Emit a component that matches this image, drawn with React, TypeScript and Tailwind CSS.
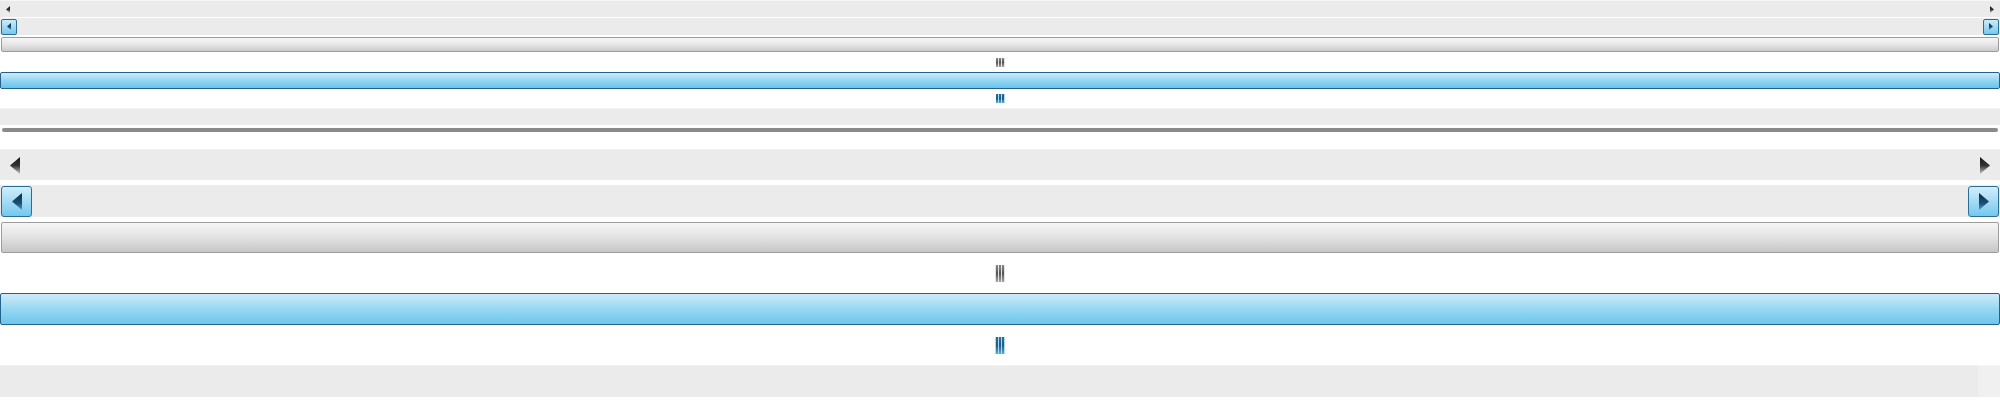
import React from 'react'

// Scrollbar skin preview: small variant on top, large variant below

function Arrow({ dir, w, h, id }: { dir: 'left' | 'right'; w: number; h: number; id: string }) {
  const pts = dir === 'left' ? `${w},0 0,${h / 2} ${w},${h}` : `0,0 ${w},${h / 2} 0,${h}`
  return (
    <svg width={w} height={h} viewBox={`0 0 ${w} ${h}`} className="block">
      <defs>
        <linearGradient id={id} x1="0" y1="0" x2="0" y2="1">
          <stop offset="0" stopColor="#1a1a1a" />
          <stop offset="0.5" stopColor="#333" />
          <stop offset="1" stopColor="#c4c4c4" />
        </linearGradient>
      </defs>
      <polygon points={pts} fill={`url(#${id})`} />
    </svg>
  )
}

function BlueArrow({ dir, w, h, id }: { dir: 'left' | 'right'; w: number; h: number; id: string }) {
  const pts = dir === 'left' ? `${w},0 0,${h / 2} ${w},${h}` : `0,0 ${w},${h / 2} 0,${h}`
  return (
    <svg width={w} height={h} viewBox={`0 0 ${w} ${h}`} className="block">
      <defs>
        <linearGradient id={id} x1="0" y1="0" x2="0" y2="1">
          <stop offset="0" stopColor="#0b2a40" />
          <stop offset="0.6" stopColor="#1d4f74" />
          <stop offset="1" stopColor="#4a9cc8" />
        </linearGradient>
      </defs>
      <polygon points={pts} fill={`url(#${id})`} />
    </svg>
  )
}

function Grip({ blue, big }: { blue?: boolean; big?: boolean }) {
  const bar = blue
    ? 'bg-gradient-to-b from-[#2a6f9c] via-[#1f5a82] to-[#5aaed8]'
    : 'bg-gradient-to-b from-[#8a8a8a] via-[#555] to-[#a8a8a8]'
  return (
    <div
      className={`flex justify-center gap-[1px] ${big ? 'h-[17px] w-[10px]' : 'h-[9px] w-[9px]'} ${
        blue ? 'bg-[#a9dcf2]' : 'bg-[#e2e2e2]'
      }`}
    >
      <div className={`w-[2px] h-full ${bar}`} />
      <div className={`w-[2px] h-full ${bar}`} />
      <div className={`w-[2px] h-full ${bar}`} />
    </div>
  )
}

export default function App() {
  return (
    <div className="w-[2000px] h-[400px] bg-white flex flex-col overflow-hidden">
      {/* small: plain arrows */}
      <div className="h-[17px] bg-[#ebebeb] border-t border-[#f5f5f5] flex items-center justify-between px-[6px]">
        <Arrow dir="left" w={4} h={7} id="sa1" />
        <Arrow dir="right" w={4} h={7} id="sa2" />
      </div>
      <div className="h-[1px]" />
      {/* small: buttons */}
      <div className="h-[17px] bg-[#ebebeb] flex items-center justify-between px-[1px]">
        <div className="w-[16px] h-[16px] rounded-[2px] border border-[#2c6d98] bg-gradient-to-b from-[#c9ebf9] to-[#74c9ee] flex items-center justify-center">
          <BlueArrow dir="left" w={4} h={7} id="sb1" />
        </div>
        <div className="w-[16px] h-[16px] rounded-[2px] border border-[#2c6d98] bg-gradient-to-b from-[#c9ebf9] to-[#74c9ee] flex items-center justify-center">
          <BlueArrow dir="right" w={4} h={7} id="sb2" />
        </div>
      </div>
      <div className="h-[2px]" />
      {/* small: thumb */}
      <div className="h-[15px] mx-[1px] rounded-[2px] border border-[#9c9c9c] bg-gradient-to-b from-[#f6f6f6] via-[#e6e6e6] to-[#cbcbcb]" />
      <div className="h-[20px] flex items-center justify-center">
        <Grip />
      </div>
      {/* small: active thumb */}
      <div className="h-[17px] rounded-[2px] border border-[#24618c] bg-gradient-to-b from-[#cdebf8] via-[#95d6f2] to-[#66c5ec]" />
      <div className="h-[19px] flex items-center justify-center">
        <Grip blue />
      </div>
      <div className="h-[17px] bg-[#ebebeb] border-t border-[#f3f3f3]" />
      <div className="h-[24px] pt-[3px] px-[2px]">
        <div className="h-[4px] rounded-full bg-[#8a8a8a]" />
      </div>

      {/* large: plain arrows */}
      <div className="h-[31px] bg-[#ebebeb] border-t border-[#f3f3f3] flex items-center justify-between px-[10px]">
        <Arrow dir="left" w={10} h={17} id="la1" />
        <Arrow dir="right" w={10} h={17} id="la2" />
      </div>
      <div className="h-[5px]" />
      {/* large: buttons */}
      <div className="h-[32px] bg-[#ebebeb] flex items-center justify-between px-[1px]">
        <div className="w-[31px] h-[31px] rounded-[3px] border border-[#2c6d98] bg-gradient-to-b from-[#d0eefa] to-[#72c8ee] flex items-center justify-center">
          <BlueArrow dir="left" w={10} h={17} id="lb1" />
        </div>
        <div className="w-[31px] h-[31px] rounded-[3px] border border-[#2c6d98] bg-gradient-to-b from-[#d0eefa] to-[#72c8ee] flex items-center justify-center">
          <BlueArrow dir="right" w={10} h={17} id="lb2" />
        </div>
      </div>
      <div className="h-[5px]" />
      {/* large: thumb */}
      <div className="h-[31px] mx-[1px] rounded-[2px] border border-[#9c9c9c] bg-gradient-to-b from-[#f6f6f6] via-[#e2e2e2] to-[#c6c6c6]" />
      <div className="h-[40px] flex items-center justify-center">
        <Grip big />
      </div>
      {/* large: active thumb */}
      <div className="h-[32px] rounded-[2px] border border-[#24618c] bg-gradient-to-b from-[#cdebf8] via-[#96d7f2] to-[#6cc7ec]" />
      <div className="h-[40px] flex items-center justify-center">
        <Grip blue big />
      </div>
      {/* large: track with corner */}
      <div className="h-[32px] bg-[#ebebeb] border-t border-[#f3f3f3] flex justify-end">
        <div className="w-[22px] h-full bg-[#f0f0f0]" />
      </div>
    </div>
  )
}
